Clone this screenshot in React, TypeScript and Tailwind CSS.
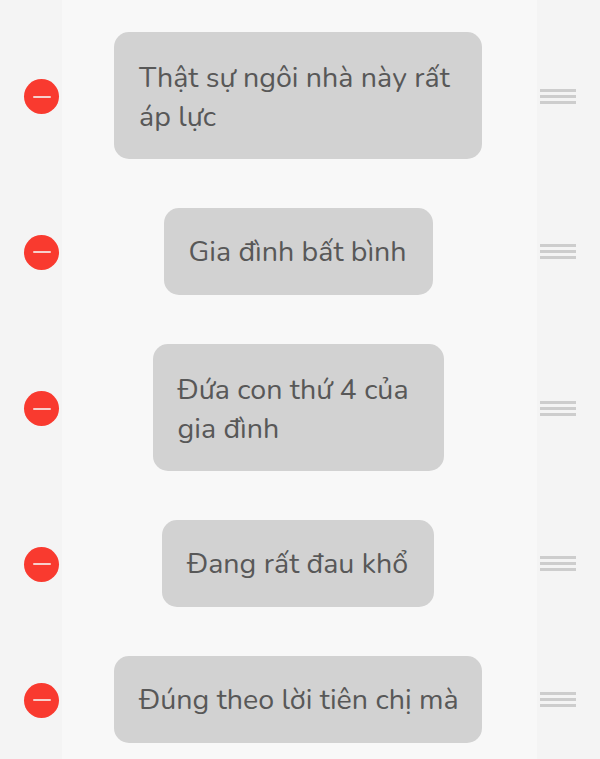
const rows = [
  { lines: ['Thật sự ngôi nhà này rất', 'áp lực'], w: 'w-[368px]' },
  { lines: ['Gia đình bất bình'], w: 'w-[269px]' },
  { lines: ['Đứa con thứ 4 của', 'gia đình'], w: 'w-[291px]' },
  { lines: ['Đang rất đau khổ'], w: 'w-[272px]' },
  { lines: ['Đúng theo lời tiên chị mà'], w: 'w-[368px]' },
];

export default function App() {
  return (
    <div className="flex h-[759px] w-[600px] overflow-hidden bg-[#f4f4f4] font-['Nunito','Noto_Sans',sans-serif]">
      {/* delete buttons */}
      <div className="flex w-[62px] shrink-0 flex-col gap-[49px] pt-8">
        {rows.map((row, i) => (
          <div
            key={i}
            className={`flex items-center justify-end pr-[3px] ${row.lines.length > 1 ? 'h-[127px] pt-[2px]' : 'h-[87px] pt-[1px]'}`}
          >
            <div className="flex h-[35px] w-[35px] items-center justify-center rounded-full bg-[#f93a2f]">
              <div className="h-[2px] w-[18px] rounded-full bg-[#f7d0cc]" />
            </div>
          </div>
        ))}
      </div>

      {/* cards */}
      <div className="flex w-[475px] shrink-0 flex-col items-center gap-[49px] bg-[#f8f8f8] pt-8 pr-[3px]">
        {rows.map((row, i) => (
          <div
            key={i}
            className={`${row.w} rounded-[15px] bg-[#d2d2d2] pl-[25px] text-[28.6px] leading-[39px] text-[#585858] ${row.lines.length > 1 ? 'pt-[26px] pb-[23px]' : 'py-6'}`}
          >
            {row.lines.map((l) => (
              <div key={l} className="whitespace-nowrap">{l}</div>
            ))}
          </div>
        ))}
      </div>

      {/* drag handles */}
      <div className="flex flex-1 flex-col gap-[49px] pt-8 pl-[3px]">
        {rows.map((row, i) => (
          <div
            key={i}
            className={`flex items-center ${row.lines.length > 1 ? 'h-[127px] pt-[2px]' : 'h-[87px]'}`}
          >
            <div className="flex w-[36px] flex-col gap-[3px]">
              <div className="h-[3px] bg-[#cdcdcd]" />
              <div className="h-[3px] bg-[#cdcdcd]" />
              <div className="h-[3px] bg-[#cdcdcd]" />
            </div>
          </div>
        ))}
      </div>
    </div>
  );
}
